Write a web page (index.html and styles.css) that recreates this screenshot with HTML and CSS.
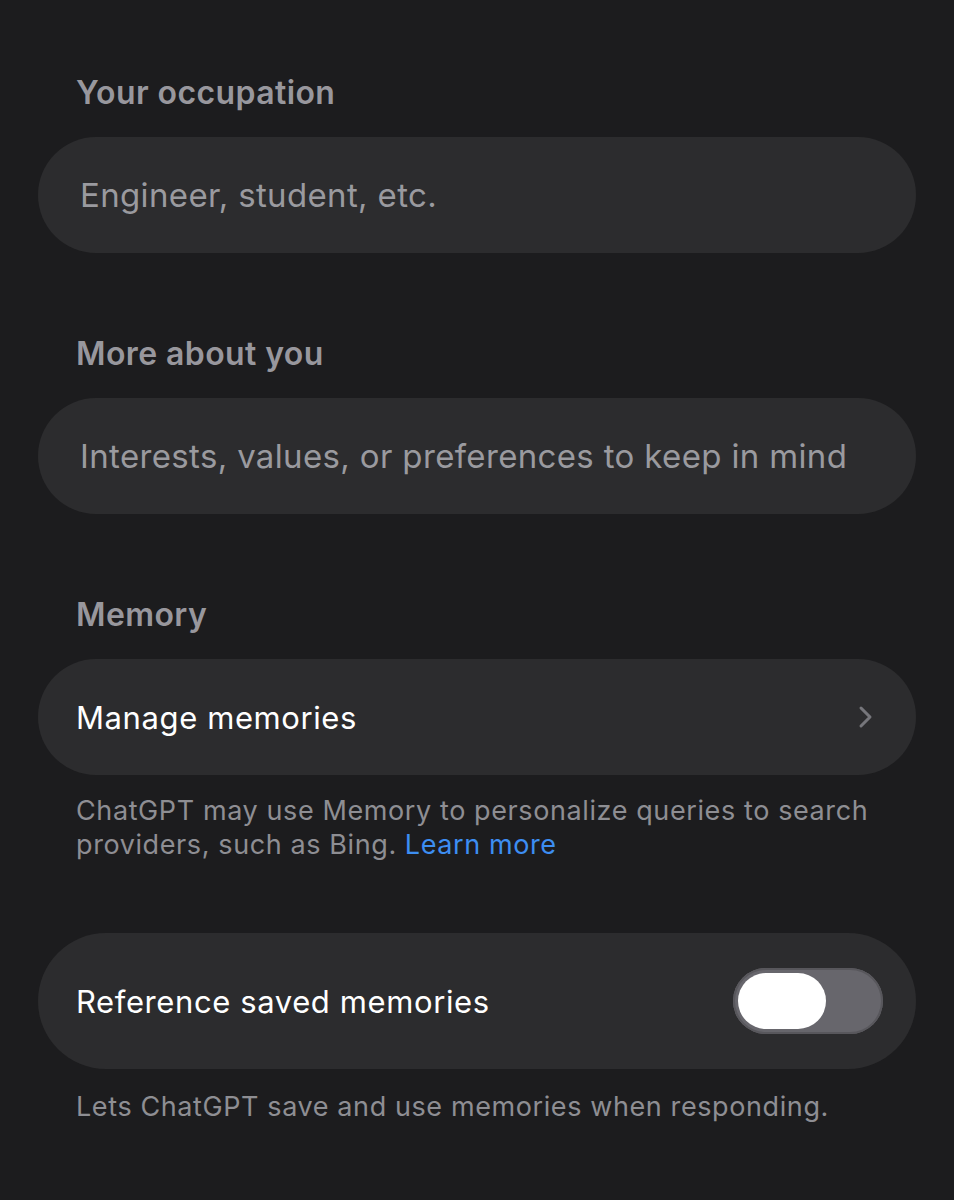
FILE: index.html
```html
<!DOCTYPE html>
<html lang="en">
<head>
  <meta charset="UTF-8">
  <meta name="viewport" content="width=device-width, initial-scale=1.0">
  <title>Personalization</title>
  <link rel="stylesheet" href="styles.css">
</head>
<body>
  <div class="settings">
    <div class="section">
      <div class="section-title">Your occupation</div>
      <div class="field">
        <input type="text" class="field-input" placeholder="Engineer, student, etc.">
      </div>
    </div>

    <div class="section">
      <div class="section-title">More about you</div>
      <div class="field">
        <input type="text" class="field-input" placeholder="Interests, values, or preferences to keep in mind">
      </div>
    </div>

    <div class="section memory-section">
      <div class="section-title">Memory</div>
      <a class="row" href="#">
        <span class="row-label">Manage memories</span>
        <svg class="chevron" width="16" height="24" viewBox="0 0 16 24" fill="none">
          <path d="M3 3 L12 12 L3 21" stroke="#76767b" stroke-width="3" stroke-linecap="round" stroke-linejoin="round"/>
        </svg>
      </a>
      <div class="note">
        <div class="note-line">ChatGPT may use Memory to personalize queries to search</div>
        <div class="note-line"><span>providers, such as Bing.</span><a href="#" class="link">Learn more</a></div>
      </div>
    </div>

    <div class="section toggle-section">
      <div class="row row-tall">
        <span class="row-label">Reference saved memories</span>
        <div class="toggle">
          <div class="knob"></div>
        </div>
      </div>
      <div class="note">Lets ChatGPT save and use memories when responding.</div>
    </div>
  </div>
</body>
</html>
```

FILE: styles.css
```css
/* Dark settings screen */
body {
  margin: 0;
  padding: 0;
  background-color: #1c1c1e;
  font-family: 'Inter', 'Noto Sans', sans-serif;
  color: #ffffff;
}

.settings {
  padding: 73px 38px 40px;
}

.section {
  margin-bottom: 81px;
}

.section-title {
  padding-left: 38px;
  font-size: 32px;
  line-height: 40px;
  font-weight: 600;
  letter-spacing: 0.4px;
  color: #98979d;
  margin-bottom: 24px;
}

.field {
  height: 116px;
  border-radius: 58px;
  background-color: #2c2c2e;
  display: flex;
  align-items: center;
  padding: 0 42px;
}

.field-input {
  width: 100%;
  border: none;
  outline: none;
  background: transparent;
  font-family: inherit;
  font-size: 33px;
  letter-spacing: 0.35px;
  color: #ffffff;
  padding: 0;
}

.field-input::placeholder {
  color: #9a9a9f;
}

.row {
  height: 116px;
  border-radius: 58px;
  background-color: #2c2c2e;
  display: flex;
  align-items: center;
  justify-content: space-between;
  padding: 0 42px 0 38px;
  text-decoration: none;
}

.row-tall {
  height: 136px;
  border-radius: 68px;
  padding-right: 33px;
}

.row-label {
  font-size: 31px;
  letter-spacing: 0.6px;
  color: #ffffff;
}

.chevron {
  display: block;
}

.note {
  margin-top: 19px;
  padding: 0 30px 0 38px;
  font-size: 27px;
  line-height: 34px;
  letter-spacing: 0.6px;
  color: #8e8e93;
}

.note-line {
  display: flex;
}

.link {
  margin-left: 8px;
  color: #3d8ef2;
  text-decoration: none;
}

.memory-section {
  margin-bottom: 71px;
}

.toggle-section .note {
  margin-top: 21px;
}

.toggle {
  width: 150px;
  height: 66px;
  border-radius: 33px;
  background-color: #67666c;
  box-sizing: border-box;
  padding: 5px;
  box-shadow: inset 0 0 0 2px #58575c;
}

.knob {
  width: 88px;
  height: 56px;
  border-radius: 28px;
  background-color: #ffffff;
}
```
